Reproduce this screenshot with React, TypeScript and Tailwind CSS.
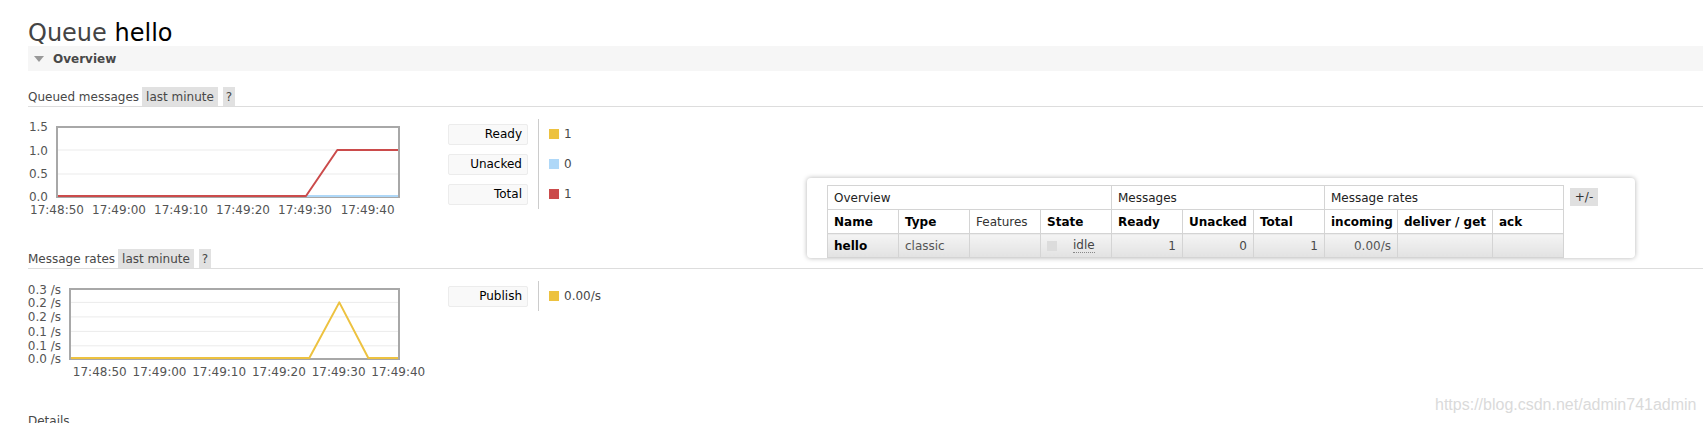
type Series = { color: string; points: string }

function Chart({
  left,
  yTicks,
  grid,
  xTicks,
  series,
}: {
  left: number
  yTicks: [string, number][]
  grid: number[]
  xTicks: [string, number][]
  series: Series[]
}) {
  return (
    <svg width={400} height={108} className="shrink-0 overflow-visible">
      {grid.map((y) => (
        <line key={y} x1={left + 2} x2={370} y1={y} y2={y} stroke="#ebebeb" strokeWidth={1} />
      ))}
      <rect x={left + 1} y={15} width={370 - left} height={70} fill="none" stroke="#a8a8a8" strokeWidth={2} />
      {series.map((s) => (
        <polyline key={s.color} points={s.points} fill="none" stroke={s.color} strokeWidth={2} strokeLinejoin="round" />
      ))}
      {yTicks.map(([t, y], i) => (
        <text key={i} x={left - 8} y={y + 4.4} textAnchor="end" fill="#545454" fontSize={12}>
          {t}
        </text>
      ))}
      {xTicks.map(([t, x]) => (
        <text key={t} x={x} y={102.4} textAnchor="middle" fill="#545454" fontSize={12}>
          {t}
        </text>
      ))}
    </svg>
  )
}

function SectionHeader({ title, pills = true }: { title: string; pills?: boolean }) {
  return (
    <div className="flex h-[20px] items-stretch border-b border-[#ddd]">
      <span className="flex items-center">{title}</span>
      {pills && (
        <>
          <span className="ml-[3px] flex items-center bg-[#e1e1e1] px-[4px]">last minute</span>
          <span className="ml-[5px] flex items-center bg-[#e1e1e1] px-[3px]">?</span>
        </>
      )}
    </div>
  )
}

function Legend({ rows }: { rows: { label: string; color: string; value: string }[] }) {
  return (
    <div className="ml-[20px] mt-[12px] flex">
      <div className="flex flex-col border-r border-[#ccc] pr-[10px]">
        {rows.map((r) => (
          <div key={r.label} className="flex h-[30px] items-center">
            <div className="flex h-[21px] w-[80px] items-center justify-end rounded-[2px] border border-[#ececec] bg-[#f9f9f9] pr-[5px] text-black">
              {r.label}
            </div>
          </div>
        ))}
      </div>
      <div className="flex flex-col">
        {rows.map((r) => (
          <div key={r.label} className="flex h-[30px] items-center pl-[10px]">
            <span className="mr-[5px] h-[10px] w-[10px]" style={{ backgroundColor: r.color }} />
            <span>{r.value}</span>
          </div>
        ))}
      </div>
    </div>
  )
}

const times = ['17:48:50', '17:49:00', '17:49:10', '17:49:20', '17:49:30', '17:49:40']

const cell = 'border border-[#d4d4d4] px-[6px] h-[24px] py-0 whitespace-nowrap'
const dataCell = `${cell} bg-linear-to-b from-[#f4f4f4] to-[#e2e2e2]`

export default function App() {
  return (
    <div className="relative h-[423px] w-full overflow-hidden bg-white font-['DejaVu_Sans',sans-serif] text-[12px] text-[#484848]">
      <div className="pl-[28px]">
        <h1 className="pt-[20px] text-[24px] leading-[26px] text-[#444]">
          Queue <b className="font-normal text-black">hello</b>
        </h1>

        <div className="flex h-[25px] items-center bg-[#f6f6f6]">
          <span className="ml-[6px] h-0 w-0 border-x-[5px] border-t-[6px] border-x-transparent border-t-[#999]" />
          <span className="ml-[9px] font-bold">Overview</span>
        </div>

        <div className="mt-[16px]">
          <SectionHeader title="Queued messages" />
        </div>
        <div className="flex items-start">
          <div className="mt-[5px]">
            <Chart
              left={28}
              yTicks={[
                ['1.5', 14.5],
                ['1.0', 38.5],
                ['0.5', 62],
                ['0.0', 85],
              ]}
              grid={[38, 62]}
              xTicks={times.map((t, i) => [t, [29, 91, 153, 215, 277, 339.7][i]])}
              series={[
                { color: '#afd8f8', points: '30,84 370,84' },
                { color: '#cb4b4b', points: '30,84 278,84 309.3,38 370,38' },
              ]}
            />
          </div>
          <Legend
            rows={[
              { label: 'Ready', color: '#edc240', value: '1' },
              { label: 'Unacked', color: '#afd8f8', value: '0' },
              { label: 'Total', color: '#cb4b4b', value: '1' },
            ]}
          />
        </div>

        <div className="mt-[29px]">
          <SectionHeader title="Message rates" />
        </div>
        <div className="flex items-start">
          <div className="mt-[5px]">
            <Chart
              left={41}
              yTicks={[
                ['0.3 /s', 15.5],
                ['0.2 /s', 28.4],
                ['0.2 /s', 42.9],
                ['0.1 /s', 57.4],
                ['0.1 /s', 71.8],
                ['0.0 /s', 85],
              ]}
              grid={[28.4, 42.9, 57.4, 71.8]}
              xTicks={times.map((t, i) => [t, [71.8, 131.5, 191.2, 250.9, 310.6, 370.3][i]])}
              series={[{ color: '#edc240', points: '43,84 281.3,84 311.3,28.4 340.3,84 370,84' }]}
            />
          </div>
          <Legend rows={[{ label: 'Publish', color: '#edc240', value: '0.00/s' }]} />
        </div>

        <div className="mt-[29px]">
          <SectionHeader title="Details" pills={false} />
        </div>
      </div>

      <div className="absolute left-[807px] top-[178px] flex h-[80px] w-[828px] items-start rounded-[4px] bg-white pl-[20px] pt-[7px] shadow-[0_0_5px_rgba(0,0,0,0.3)]">
        <table className="w-[736px] table-fixed border-collapse text-left">
          <colgroup>
            <col className="w-[71px]" />
            <col className="w-[71px]" />
            <col className="w-[71px]" />
            <col className="w-[71px]" />
            <col className="w-[71px]" />
            <col className="w-[71px]" />
            <col className="w-[71px]" />
            <col className="w-[73px]" />
            <col className="w-[95px]" />
            <col className="w-[71px]" />
          </colgroup>
          <thead>
            <tr>
              <th colSpan={4} className={`${cell} font-normal text-[#222]`}>Overview</th>
              <th colSpan={3} className={`${cell} font-normal text-[#222]`}>Messages</th>
              <th colSpan={3} className={`${cell} font-normal text-[#222]`}>Message rates</th>
            </tr>
            <tr className="text-black">
              <th className={cell}>Name</th>
              <th className={cell}>Type</th>
              <th className={`${cell} font-normal text-[#333]`}>Features</th>
              <th className={cell}>State</th>
              <th className={cell}>Ready</th>
              <th className={cell}>Unacked</th>
              <th className={cell}>Total</th>
              <th className={cell}>incoming</th>
              <th className={cell}>deliver / get</th>
              <th className={cell}>ack</th>
            </tr>
          </thead>
          <tbody>
            <tr>
              <td className={`${dataCell} font-bold text-black`}>hello</td>
              <td className={`${dataCell} text-[#555]`}>classic</td>
              <td className={dataCell} />
              <td className={dataCell}>
                <div className="flex items-center gap-[16px]">
                  <span className="h-[10px] w-[10px] bg-[#dcdcdc]" />
                  <span className="border-b border-dotted border-[#888] leading-[14px] text-[#444]">idle</span>
                </div>
              </td>
              <td className={`${dataCell} text-right`}>1</td>
              <td className={`${dataCell} text-right`}>0</td>
              <td className={`${dataCell} text-right`}>1</td>
              <td className={`${dataCell} text-right text-[#555]`}>0.00/s</td>
              <td className={dataCell} />
              <td className={dataCell} />
            </tr>
          </tbody>
        </table>
        <span className="ml-[6px] mt-[3px] flex h-[18px] w-[28px] items-center justify-center bg-[#e0e0e0] text-[#333]">+/-</span>
      </div>

      <span className="absolute left-[1435px] top-[397px] font-['Liberation_Sans',sans-serif] text-[16px] leading-[16px] text-[#dadada]">
        https://blog.csdn.net/admin741admin
      </span>
    </div>
  )
}
